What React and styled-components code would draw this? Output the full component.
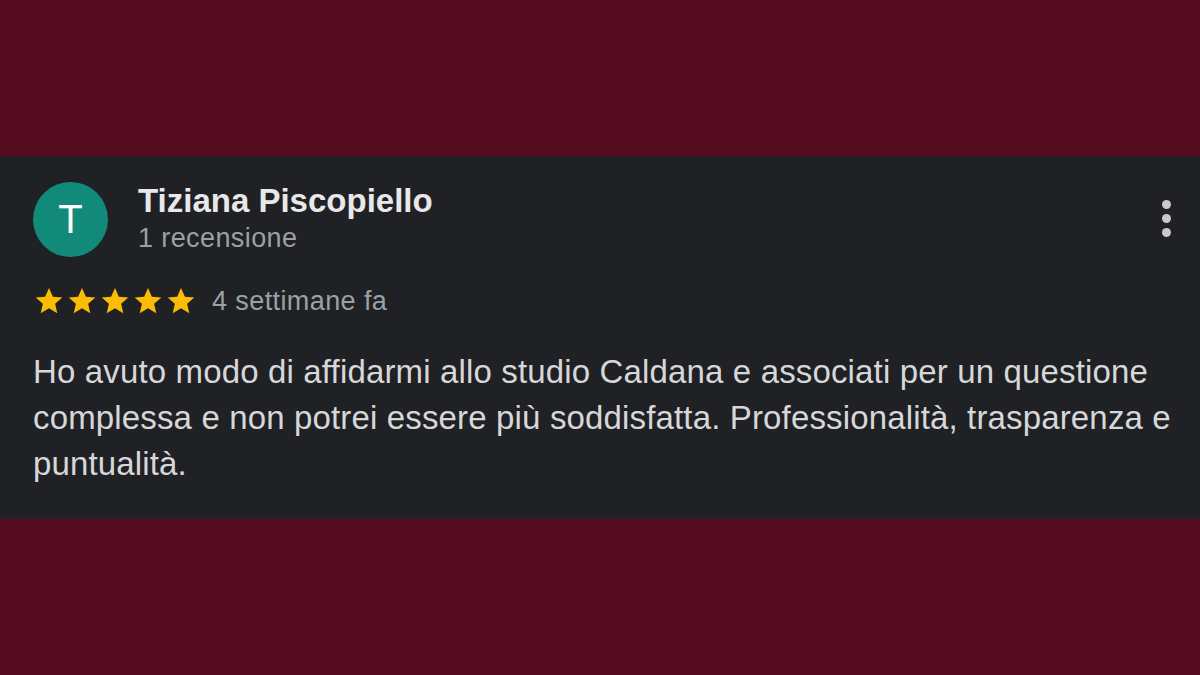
import React from "react";
import styled, { createGlobalStyle } from "styled-components";

const GlobalStyle = createGlobalStyle`
  html, body {
    margin: 0;
    padding: 0;
    background: #570d21;
  }
  body {
    font-family: "Liberation Sans", Arial, sans-serif;
  }
`;

const Page = styled.div`
  width: 1200px;
  height: 675px;
  display: flex;
  flex-direction: column;
  justify-content: center;
  background: #570d21;
`;

const Card = styled.div`
  height: 363px;
  box-sizing: border-box;
  background: #202124;
  padding: 26px 10px 0 33px;
  display: flex;
  flex-direction: column;
`;

const Header = styled.div`
  display: flex;
  align-items: flex-start;
`;

const Avatar = styled.div`
  width: 75px;
  height: 75px;
  border-radius: 50%;
  background: #128a7a;
  color: #ffffff;
  display: flex;
  align-items: center;
  justify-content: center;
  font-size: 40px;
  font-weight: normal;
  flex-shrink: 0;
`;

const Author = styled.div`
  margin-left: 30px;
  display: flex;
  flex-direction: column;
  flex: 1;
`;

const Name = styled.div`
  font-size: 33px;
  font-weight: bold;
  color: #e8e8ea;
  line-height: 38px;
`;

const Meta = styled.div`
  font-size: 27px;
  color: #9aa0a6;
  line-height: 32px;
  letter-spacing: 0.4px;
  margin-top: 2px;
`;

const MoreButton = styled.div`
  display: flex;
  flex-direction: column;
  gap: 5px;
  margin-top: 18px;
  margin-right: 19px;
`;

const Dot = styled.span`
  width: 9px;
  height: 9px;
  border-radius: 50%;
  background: #c8c9cb;
`;

const RatingRow = styled.div`
  display: flex;
  align-items: center;
  margin-top: 28px;
  height: 32px;
`;

const Stars = styled.div`
  display: flex;
  gap: 1px;
`;

const When = styled.span`
  font-size: 27px;
  line-height: 32px;
  color: #9aa0a6;
  letter-spacing: 0.4px;
  margin-left: 15px;
`;

const Body = styled.p`
  margin: 32px 0 0;
  font-size: 33px;
  line-height: 46px;
  letter-spacing: 0.15px;
  color: #d6d7d9;
`;

const Star = () => (
  <svg width="32" height="32" viewBox="0 0 24 24">
    <path
      fill="#fbbc04"
      d="M12 2.2l2.9 6.6 7.1.6-5.4 4.7 1.6 7-6.2-3.7-6.2 3.7 1.6-7L2 9.4l7.1-.6z"
    />
  </svg>
);

export default function App() {
  return (
    <>
      <GlobalStyle />
      <Page>
        <Card>
          <Header>
            <Avatar>T</Avatar>
            <Author>
              <Name>Tiziana Piscopiello</Name>
              <Meta>1 recensione</Meta>
            </Author>
            <MoreButton>
              <Dot />
              <Dot />
              <Dot />
            </MoreButton>
          </Header>
          <RatingRow>
            <Stars>
              {[0, 1, 2, 3, 4].map((i) => (
                <Star key={i} />
              ))}
            </Stars>
            <When>4 settimane fa</When>
          </RatingRow>
          <Body>
            Ho avuto modo di affidarmi allo studio Caldana e associati per un questione
            complessa e non potrei essere più soddisfatta. Professionalità, trasparenza e
            puntualità.
          </Body>
        </Card>
      </Page>
    </>
  );
}
